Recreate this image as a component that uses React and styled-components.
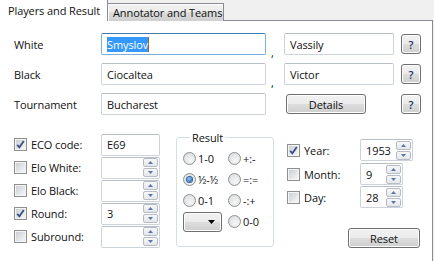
import React from "react";
import styled, { createGlobalStyle, css } from "styled-components";

const GlobalStyle = createGlobalStyle`
  body {
    margin: 0;
    background: #f0f0f0;
    font-family: "Open Sans", "Noto Sans", sans-serif;
    font-size: 11px;
    letter-spacing: -0.1px;
    color: #111;
    overflow: hidden;
  }
`;

const Window = styled.div`
  width: 434px;
  margin-left: -1px;
  margin-top: -2px;
`;

const TabStrip = styled.div`
  display: flex;
  align-items: flex-end;
  height: 23px;
  position: relative;
  z-index: 1;
  margin-bottom: -1px;
`;

const Tab = styled.div`
  box-sizing: border-box;
  border: 1px solid #898c95;
  border-bottom: none;
  white-space: nowrap;
  line-height: 15px;
  ${(p) =>
    p.$active
      ? css`
          width: 109px;
          height: 23px;
          padding: 4px 0 0 8px;
          background: #fff;
        `
      : css`
          width: 117px;
          height: 18px;
          margin-left: -1px;
          padding: 1px 0 0 5px;
          background: linear-gradient(#f2f2f2, #ebebeb 50%, #dddddd 50%, #cfcfcf);
          box-shadow: inset 1px 1px 0 #fff;
        `}
`;

const Panel = styled.div`
  box-sizing: border-box;
  height: 250px;
  background: #fff;
  border: 1px solid #898c95;
  padding: 12px 11px 0 14px;
`;

const NamesGrid = styled.div`
  display: grid;
  grid-template-columns: 87px 165px 18px 110px 1fr 20px;
  grid-auto-rows: 22px;
  row-gap: 8px;
  align-items: center;
`;

const Label = styled.span`
  white-space: nowrap;
`;

const TextBox = styled.div`
  box-sizing: border-box;
  height: 22px;
  border: 1px solid ${(p) => (p.$focused ? "#7eaee0" : "#cdd3da")};
  border-top-color: ${(p) => (p.$focused ? "#3d7bad" : "#b8bec6")};
  border-radius: 2px;
  padding: 0 5px;
  display: flex;
  align-items: center;
  background: #fff;
  white-space: nowrap;
  width: ${(p) => p.$w || "auto"};
`;

const Selected = styled.span`
  background: #3399ff;
  color: #fff;
  line-height: 15px;
  border-right: 1px solid #b05a1a;
`;

const Comma = styled.span`
  align-self: end;
  padding-left: 5px;
  line-height: 12px;
  margin-bottom: -4px;
`;

const Button = styled.button`
  box-sizing: border-box;
  font: inherit;
  letter-spacing: inherit;
  color: #111;
  height: 20px;
  padding: 0;
  border: 1px solid #707070;
  border-radius: 3px;
  background: linear-gradient(#f2f2f2, #ebebeb 50%, #dddddd 50%, #cfcfcf);
  box-shadow: inset 0 0 0 1px #fcfcfc;
  width: ${(p) => p.$w || "auto"};
  margin-left: ${(p) => p.$ml || "0"};
`;

const HelpButton = styled(Button)`
  width: 20px;
  color: #1c2f5a;
  font-weight: 600;
`;

const ResetButton = styled(Button)`
  align-self: flex-end;
  margin-top: 20px;
  margin-right: 1px;
`;

const Lower = styled.div`
  display: flex;
  align-items: flex-start;
  margin-top: 18px;
`;

const LeftCol = styled.div`
  display: flex;
  flex-direction: column;
  width: 146px;
`;

const FieldRow = styled.div`
  display: grid;
  grid-template-columns: ${(p) => p.$cols};
  align-items: center;
  height: ${(p) => p.$h || "23px"};
`;

const CheckLabel = styled.label`
  display: flex;
  align-items: center;
  gap: 4px;
  white-space: nowrap;
`;

const Box = styled.span`
  box-sizing: border-box;
  width: 13px;
  height: 13px;
  border: 1px solid #8e8f8f;
  background: #f4f4f4;
  padding: 1px;
  display: inline-flex;
  flex: none;
  span {
    flex: 1;
    background: linear-gradient(135deg, #cbcfd5, #f6f6f6);
    display: flex;
    align-items: center;
    justify-content: center;
  }
`;

function Checkbox({ checked }) {
  return (
    <Box>
      <span>
        {checked && (
          <svg width="9" height="9" viewBox="0 0 9 9">
            <path d="M1.2 4.8 L3.4 7.3 L7.8 1" fill="none" stroke="#3a4f86" strokeWidth="1.8" />
          </svg>
        )}
      </span>
    </Box>
  );
}

const SpinWrap = styled(TextBox)`
  padding-right: 1px;
  justify-content: space-between;
`;

const SpinButtons = styled.div`
  display: flex;
  flex-direction: column;
  gap: 1px;
`;

const SpinBtn = styled.span`
  box-sizing: border-box;
  width: 15px;
  height: 9px;
  border: 1px solid #b5bcc7;
  border-radius: 2px;
  background: linear-gradient(#f7f7f7, #e4e6ea);
  display: flex;
  align-items: center;
  justify-content: center;
  svg {
    display: block;
  }
`;

function Spin({ value, w }) {
  return (
    <SpinWrap $w={w}>
      <span>{value}</span>
      <SpinButtons>
        <SpinBtn>
          <svg width="5" height="3" viewBox="0 0 5 3">
            <path d="M0 3 L2.5 0 L5 3 Z" fill="#5a76a8" />
          </svg>
        </SpinBtn>
        <SpinBtn>
          <svg width="5" height="3" viewBox="0 0 5 3">
            <path d="M0 0 L5 0 L2.5 3 Z" fill="#5a76a8" />
          </svg>
        </SpinBtn>
      </SpinButtons>
    </SpinWrap>
  );
}

const ResultGroup = styled.fieldset`
  box-sizing: border-box;
  width: 98px;
  margin: -3px 0 0 16px;
  padding: 3px 0 14px 6px;
  border: 1px solid #d5dfe5;
  border-radius: 3px;
  legend {
    margin-left: 7px;
    padding: 0 2px;
    line-height: 15px;
  }
`;

const RadioGrid = styled.div`
  display: grid;
  grid-template-columns: 45px 1fr;
  grid-auto-rows: 21px;
  align-items: center;
`;

const RadioLabel = styled.label`
  display: flex;
  align-items: center;
  gap: 2px;
  white-space: nowrap;
`;

const RadioDot = styled.span`
  box-sizing: border-box;
  width: 13px;
  height: 13px;
  border-radius: 50%;
  border: 1px solid #8e8f8f;
  background: radial-gradient(circle at 60% 65%, #f7f7f7, #d6d8db);
  display: inline-flex;
  align-items: center;
  justify-content: center;
  flex: none;
  &::after {
    content: "";
    width: 5px;
    height: 5px;
    border-radius: 50%;
    display: ${(p) => (p.$on ? "block" : "none")};
    background: radial-gradient(circle at 40% 35%, #8cc4f5, #1b58a8);
    box-shadow: 0 0 0 1px #2a5f9e;
  }
`;

function Radio({ on, children }) {
  return (
    <RadioLabel>
      <RadioDot $on={on} />
      {children}
    </RadioLabel>
  );
}

const DropButton = styled(Button)`
  width: 39px;
  display: flex;
  align-items: center;
  justify-content: flex-end;
  padding-right: 6px;
`;

const DateCol = styled.div`
  display: flex;
  flex-direction: column;
  margin: 5px 0 0 13px;
  width: 134px;
`;

export default function App() {
  return (
    <>
      <GlobalStyle />
      <Window>
        <TabStrip>
          <Tab $active>Players and Result</Tab>
          <Tab>Annotator and Teams</Tab>
        </TabStrip>
        <Panel>
          <NamesGrid>
            <Label>White</Label>
            <TextBox $focused>
              <Selected>Smyslov</Selected>
            </TextBox>
            <Comma>,</Comma>
            <TextBox>Vassily</TextBox>
            <span />
            <HelpButton>?</HelpButton>

            <Label>Black</Label>
            <TextBox>Ciocaltea</TextBox>
            <Comma>,</Comma>
            <TextBox>Victor</TextBox>
            <span />
            <HelpButton>?</HelpButton>

            <Label>Tournament</Label>
            <TextBox>Bucharest</TextBox>
            <span />
            <Button $w="80px" $ml="2px">Details</Button>
            <span />
            <HelpButton>?</HelpButton>
          </NamesGrid>

          <Lower>
            <LeftCol>
              <FieldRow $cols="87px 59px">
                <CheckLabel><Checkbox checked />ECO code:</CheckLabel>
                <TextBox>E69</TextBox>
              </FieldRow>
              <FieldRow $cols="87px 59px">
                <CheckLabel><Checkbox />Elo White:</CheckLabel>
                <Spin />
              </FieldRow>
              <FieldRow $cols="87px 59px">
                <CheckLabel><Checkbox />Elo Black:</CheckLabel>
                <Spin />
              </FieldRow>
              <FieldRow $cols="87px 59px">
                <CheckLabel><Checkbox checked />Round:</CheckLabel>
                <Spin value="3" />
              </FieldRow>
              <FieldRow $cols="87px 59px">
                <CheckLabel><Checkbox />Subround:</CheckLabel>
                <Spin />
              </FieldRow>
            </LeftCol>

            <ResultGroup>
              <legend>Result</legend>
              <RadioGrid>
                <Radio>1-0</Radio>
                <Radio>+:-</Radio>
                <Radio on>½-½</Radio>
                <Radio>=:=</Radio>
                <Radio>0-1</Radio>
                <Radio>-:+</Radio>
                <DropButton>
                  <svg width="7" height="4" viewBox="0 0 7 4">
                    <path d="M0 0 L7 0 L3.5 4 Z" fill="#000" />
                  </svg>
                </DropButton>
                <Radio>0-0</Radio>
              </RadioGrid>
            </ResultGroup>

            <DateCol>
              <FieldRow $cols="73px auto" $h="24px">
                <CheckLabel><Checkbox checked />Year:</CheckLabel>
                <Spin value="1953" w="53px" />
              </FieldRow>
              <FieldRow $cols="73px auto" $h="24px">
                <CheckLabel><Checkbox />Month:</CheckLabel>
                <Spin value="9" w="43px" />
              </FieldRow>
              <FieldRow $cols="73px auto" $h="22px">
                <CheckLabel><Checkbox />Day:</CheckLabel>
                <Spin value="28" w="43px" />
              </FieldRow>
              <ResetButton $w="72px">Reset</ResetButton>
            </DateCol>
          </Lower>
        </Panel>
      </Window>
    </>
  );
}
